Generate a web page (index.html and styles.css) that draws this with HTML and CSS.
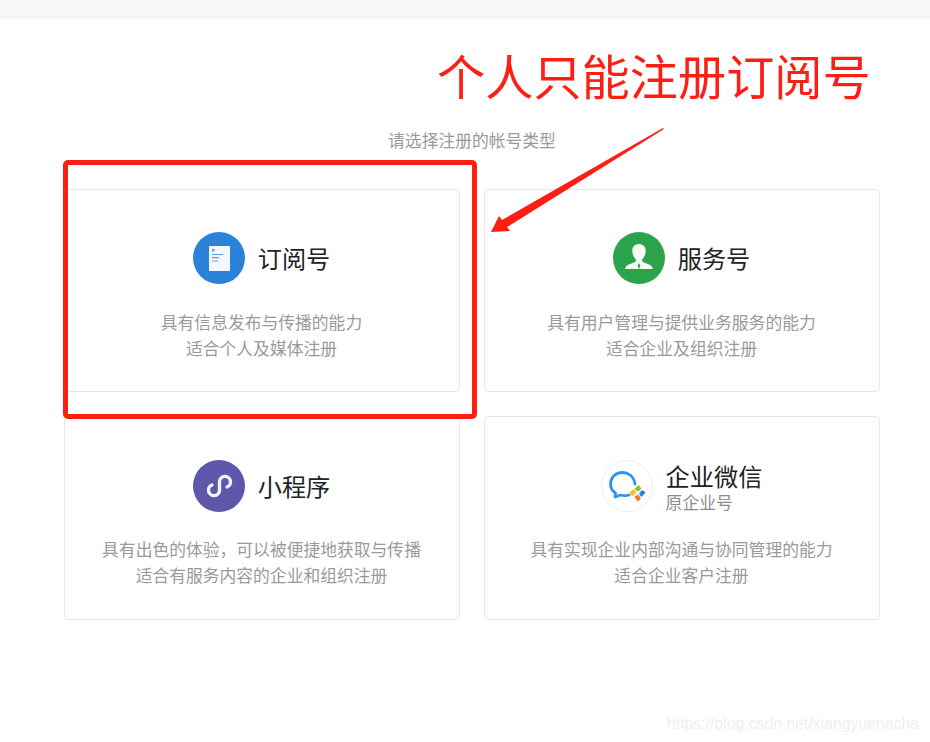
FILE: index.html
```html
<!DOCTYPE html>
<html lang="zh-CN">
<head>
<meta charset="utf-8">
<title>注册</title>
<link rel="stylesheet" href="styles.css">
</head>
<body>
<div class="topbar"></div>
<main class="main">
  <p class="subtitle">请选择注册的帐号类型</p>
  <div class="grid">
    <section class="card">
      <div class="card-head">
        <svg class="icon" viewBox="0 0 52 52"><circle cx="26" cy="26" r="26" fill="#2b82d9"/><rect x="16" y="14" width="21" height="25" rx="1" fill="#f4f8fd"/><rect x="19" y="17" width="2.500" height="2.500" fill="#5f9fe0"/><path d="M19 22.500h11M19 25.700h7M19 29h6" stroke="#5f9fe0" stroke-width="1.200"/></svg>
        <h2 class="card-title">订阅号</h2>
      </div>
      <p class="desc">具有信息发布与传播的能力<br>适合个人及媒体注册</p>
    </section>
    <section class="card">
      <div class="card-head">
        <svg class="icon" viewBox="0 0 52 52"><circle cx="26" cy="26" r="26" fill="#2ca44c"/><path d="M26 12c-4.600 0-7 3.300-6.700 7.500.2 3 1.500 6 3.500 7.700v2.300c-1.800 1.300-6.800 2.400-9 4.300-1 .9-1.500 1.900-1.600 3.200h27.600c-.1-1.300-.6-2.300-1.600-3.200-2.200-1.900-7.200-3-9-4.300v-2.300c2-1.700 3.300-4.700 3.500-7.700.3-4.200-2.100-7.500-6.700-7.500z" fill="#f7fbf8"/><path d="M26 31l1.300 2.500-1.300 4-1.300-4z" fill="#2ca44c"/></svg>
        <h2 class="card-title">服务号</h2>
      </div>
      <p class="desc">具有用户管理与提供业务服务的能力<br>适合企业及组织注册</p>
    </section>
    <section class="card">
      <div class="card-head">
        <svg class="icon" viewBox="0 0 52 52"><circle cx="26" cy="26" r="26" fill="#5f57ab"/><path d="M34 27A5.500 5.500 0 1 0 26.500 22V30A5.500 5.500 0 1 1 19 25" fill="none" stroke="#f3f2fa" stroke-width="3.400" stroke-linecap="round"/></svg>
        <h2 class="card-title">小程序</h2>
      </div>
      <p class="desc">具有出色的体验，可以被便捷地获取与传播<br>适合有服务内容的企业和组织注册</p>
    </section>
    <section class="card">
      <div class="card-head">
        <svg class="icon" viewBox="0 0 52 52"><circle cx="26" cy="26" r="25.500" fill="#fff" stroke="#eceff1"/><path d="M34 24C33 16 27 12.500 21.500 12.500 14 12.500 9.500 18 9.500 24c0 4.500 2.500 7.500 5 9l-.5 4 5.500-2c3 .8 6 1 8.500 0" fill="none" stroke="#2e93ec" stroke-width="2.800" stroke-linecap="round" stroke-linejoin="round"/><path d="M34.500 29l3-3 2 2.500-2 2z" fill="#8fc31f" stroke="#8fc31f" stroke-linejoin="round" stroke-width="1.500"/><path d="M29.500 32.500l3-2.500 2 2-3.500 3.500z" fill="#f7c325" stroke="#f7c325" stroke-linejoin="round" stroke-width="1.500"/><path d="M41 31l2.500 1.500-3 3.500-1.500-2z" fill="#2e7fe0" stroke="#2e7fe0" stroke-linejoin="round" stroke-width="1.500"/><path d="M34.500 37l2.500-1.500 2 3-2 2z" fill="#f2792a" stroke="#f2792a" stroke-linejoin="round" stroke-width="1.500"/></svg>
        <div class="card-names">
          <h2 class="card-title">企业微信</h2>
          <p class="card-sub">原企业号</p>
        </div>
      </div>
      <p class="desc">具有实现企业内部沟通与协同管理的能力<br>适合企业客户注册</p>
    </section>
  </div>
</main>
<div class="note">个人只能注册订阅号</div>
<div class="highlight"></div>
<svg class="arrow" viewBox="0 0 190 120"><path d="M173 7 174 8 17 106 20 110 1 111 9 95 12 99z" fill="#fe1e14"/></svg>
<div class="watermark">https://blog.csdn.net/xiangyuenacha</div>
</body>
</html>
```
FILE: styles.css
```css
* { box-sizing: border-box; }
html, body { margin: 0; padding: 0; }
body {
  width: 930px;
  height: 742px;
  overflow: hidden;
  background: #fff;
  position: relative;
  font-family: "Noto Sans CJK SC", "Liberation Sans", sans-serif;
}
.topbar { height: 19px; background: #f6f7f9; }
.main { padding: 109px 50px 0 64px; }
.subtitle {
  margin: 0 0 37px;
  height: 24px;
  line-height: 24px;
  font-size: 16.800px;
  color: #9a9a9a;
  text-align: center;
}
.grid {
  display: grid;
  grid-template-columns: 396px 396px;
  grid-template-rows: 203px 204px;
  gap: 24px;
}
.card {
  border: 1px solid #e6e7eb;
  border-radius: 4px;
  padding: 42px 0 0;
  text-align: center;
}
.card:nth-child(n+3) { padding-top: 43px; }
.card-head {
  display: flex;
  align-items: center;
  justify-content: center;
  gap: 13px;
  height: 52px;
  padding-right: 1px;
  text-align: left;
}
.icon { width: 52px; height: 52px; flex: none; display: block; }
.card-names { padding-top: 1px; }
.card-title {
  margin: 0;
  font-size: 24.200px;
  font-weight: 400;
  line-height: 30px;
  color: #222;
}
.card-sub {
  margin: 0;
  font-size: 16.800px;
  line-height: 22px;
  color: #8d8d8d;
}
.desc {
  margin: 25px 0 0;
  padding-right: 1px;
  font-size: 16.800px;
  line-height: 26px;
  color: #9a9a9a;
}
.card:nth-child(n+3) .desc { margin-top: 24px; }
.note {
  position: absolute;
  left: 437px;
  top: 40px;
  font-size: 48.200px;
  line-height: 68px;
  color: #fe1e14;
  white-space: nowrap;
}
.highlight {
  position: absolute;
  left: 63px;
  top: 160px;
  width: 414px;
  height: 259px;
  border: 5px solid #fe1e14;
  border-radius: 5px;
}
.arrow {
  position: absolute;
  left: 490px;
  top: 121px;
  width: 190px;
  height: 120px;
}
.watermark {
  position: absolute;
  left: 667px;
  top: 714px;
  font-family: "Liberation Sans", sans-serif;
  font-size: 15.800px;
  line-height: 20px;
  color: #efefef;
  white-space: nowrap;
}
```
